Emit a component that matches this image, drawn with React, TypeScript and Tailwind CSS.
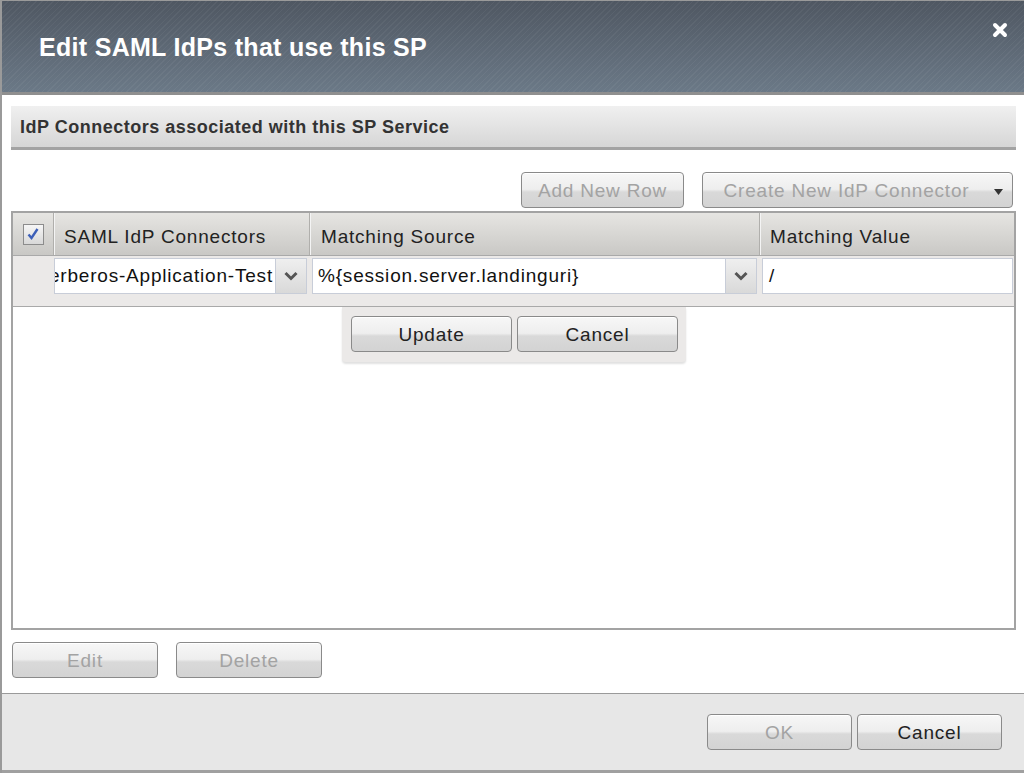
import React from "react";

const btnBase =
  "h-[36px] rounded-[4px] border border-[#8a8a8a] bg-[linear-gradient(to_bottom,#f7f7f7_0%,#eeeeee_48%,#d9d9d9_56%,#d3d3d3_100%)] text-[19px] tracking-[0.8px] leading-none flex items-center justify-center shadow-[inset_0_1px_0_#ffffff]";

function Btn({
  label,
  width,
  disabled,
  caret,
}: {
  label: string;
  width: string;
  disabled?: boolean;
  caret?: boolean;
}) {
  return (
    <button
      className={`${btnBase} ${width} ${disabled ? "text-[#a3a3a3]" : "text-[#222]"} relative`}
    >
      {label}
      {caret && (
        <svg
          width="9"
          height="6"
          viewBox="0 0 9 6"
          className="absolute right-[9px] top-[16px]"
        >
          <path d="M0 0h9L4.5 6z" fill="#333" />
        </svg>
      )}
    </button>
  );
}

function Chevron() {
  return (
    <svg width="14" height="10" viewBox="0 0 14 10">
      <path
        d="M1.5 2 L7 7.5 L12.5 2"
        fill="none"
        stroke="#555"
        strokeWidth="3"
        strokeLinejoin="miter"
      />
    </svg>
  );
}

function SelectBox({ value, width, clipStart }: { value: string; width: string; clipStart?: boolean }) {
  return (
    <div className={`flex h-[36px] ${width} border border-[#c8cdd8] bg-white`}>
      <div
        className={`flex-1 flex items-center overflow-hidden whitespace-nowrap text-[19px] tracking-[0.8px] text-[#111] ${
          clipStart ? "justify-end pr-[2px]" : "justify-start pl-[5px]"
        }`}
      >
        <span className="shrink-0">{value}</span>
      </div>
      <div className="w-[31px] flex items-center justify-center border-l border-[#c8cdd8] bg-[linear-gradient(to_bottom,#efefef,#d9d9d9)]">
        <Chevron />
      </div>
    </div>
  );
}

export default function App() {
  return (
    <div className="w-[1024px] h-[773px] flex flex-col bg-white border-l-2 border-t border-[#9a9a9a] font-['Liberation_Sans',Arial,sans-serif] overflow-hidden">
      {/* title bar */}
      <div className="relative h-[94px] shrink-0 border-b-[3px] border-[#8f8f8f] bg-[image:repeating-linear-gradient(135deg,rgba(255,255,255,0.045)_0px,rgba(255,255,255,0.045)_1px,transparent_1px,transparent_4px),linear-gradient(to_bottom,#4f5762,#6b7987)] flex items-center">
        <h1 className="pl-[37px] pt-[3px] text-[25px] font-bold text-white tracking-[0.3px]">
          Edit SAML IdPs that use this SP
        </h1>
        <svg
          width="16"
          height="16"
          viewBox="0 0 16 16"
          className="absolute right-[16px] top-[21px]"
        >
          <path
            d="M3 3 L13 13 M13 3 L3 13"
            stroke="#ffffff"
            strokeWidth="4"
            strokeLinecap="round"
          />
        </svg>
      </div>

      {/* body */}
      <div className="flex-1 flex flex-col pl-[9px] pr-[8px] pt-[11px]">
        <div className="h-[44px] flex items-center pl-[9px] bg-[linear-gradient(to_bottom,#f0f0f0,#d6d6d6)] border-b-[3px] border-[#a3a3a3]">
          <span className="text-[18px] tracking-[0.5px] font-bold text-[#333] pt-[1px]">
            IdP Connectors associated with this SP Service
          </span>
        </div>

        <div className="flex justify-end gap-[18px] pr-[3px] mt-[22px]">
          <Btn label="Add New Row" width="w-[163px]" disabled />
          <Btn label="Create New IdP Connector" width="w-[311px] pr-[22px]" disabled caret />
        </div>

        {/* grid */}
        <div className="relative mt-[3px] h-[419px] border-2 border-[#a3a3a3] flex flex-col">
          <div className="h-[43px] shrink-0 flex border-b border-[#a9a9a9] bg-[linear-gradient(to_bottom,#e6e5e2,#c9c8c5)] text-[19px] tracking-[0.8px] text-[#222]">
            <div className="w-[41px] flex items-center justify-center border-r border-[#b0afac] shadow-[1px_0_0_#f4f4f4]">
              <div className="w-[21px] h-[21px] border border-[#8c8c8c] bg-[linear-gradient(to_bottom,#f6f6f6,#d8d8d8)] flex items-center justify-center">
                <svg width="14" height="14" viewBox="0 0 14 14">
                  <path
                    d="M2.5 7.5 L5.5 11 L11.5 2"
                    fill="none"
                    stroke="#3c5fb8"
                    strokeWidth="2.4"
                  />
                </svg>
              </div>
            </div>
            <div className="w-[256px] flex items-center pl-[10px] pt-[7px] border-r border-[#b0afac] shadow-[1px_0_0_#f4f4f4]">
              SAML IdP Connectors
            </div>
            <div className="w-[450px] flex items-center pl-[11px] pt-[7px] border-r border-[#b0afac] shadow-[1px_0_0_#f4f4f4]">
              Matching Source
            </div>
            <div className="flex-1 flex items-center pl-[10px] pt-[7px]">Matching Value</div>
          </div>

          {/* editing row */}
          <div className="h-[51px] shrink-0 bg-[#ebe9e8] border-b border-[#a9a9a9] flex pt-[2px] pl-[41px]">
            <SelectBox
              value="Kerberos-Application-Test"
              width="w-[253px]"
              clipStart
            />
            <div className="ml-[5px]">
              <SelectBox value="%{session.server.landinguri}" width="w-[445px]" />
            </div>
            <div className="ml-[5px] mr-[1px] flex-1 h-[36px] border border-[#c8cdd8] bg-white flex items-center pl-[6px] text-[19px] text-[#111]">
              /
            </div>
          </div>

          <div className="flex-1 bg-white" />

          {/* row editor popup */}
          <div className="absolute left-[329px] top-[94px] w-[344px] h-[55px] bg-[#ebe9e8] rounded-b-[4px] shadow-[0_2px_2px_rgba(0,0,0,0.12)] flex gap-[5px] pl-[9px] pt-[9px]">
            <Btn label="Update" width="w-[161px] h-[36px]" />
            <Btn label="Cancel" width="w-[161px] h-[36px]" />
          </div>
        </div>

        <div className="flex gap-[18px] mt-[12px] ml-[1px]">
          <Btn label="Edit" width="w-[146px]" disabled />
          <Btn label="Delete" width="w-[146px]" disabled />
        </div>
      </div>

      {/* footer */}
      <div className="h-[80px] shrink-0 mt-[15px] border-t border-b-[3px] border-t-[#9a9a9a] border-b-[#a0a0a0] bg-[#e7e7e7] flex justify-end items-start gap-[5px] pr-[22px] pt-[20px]">
        <Btn label="OK" width="w-[145px]" disabled />
        <Btn label="Cancel" width="w-[145px]" />
      </div>
    </div>
  );
}
